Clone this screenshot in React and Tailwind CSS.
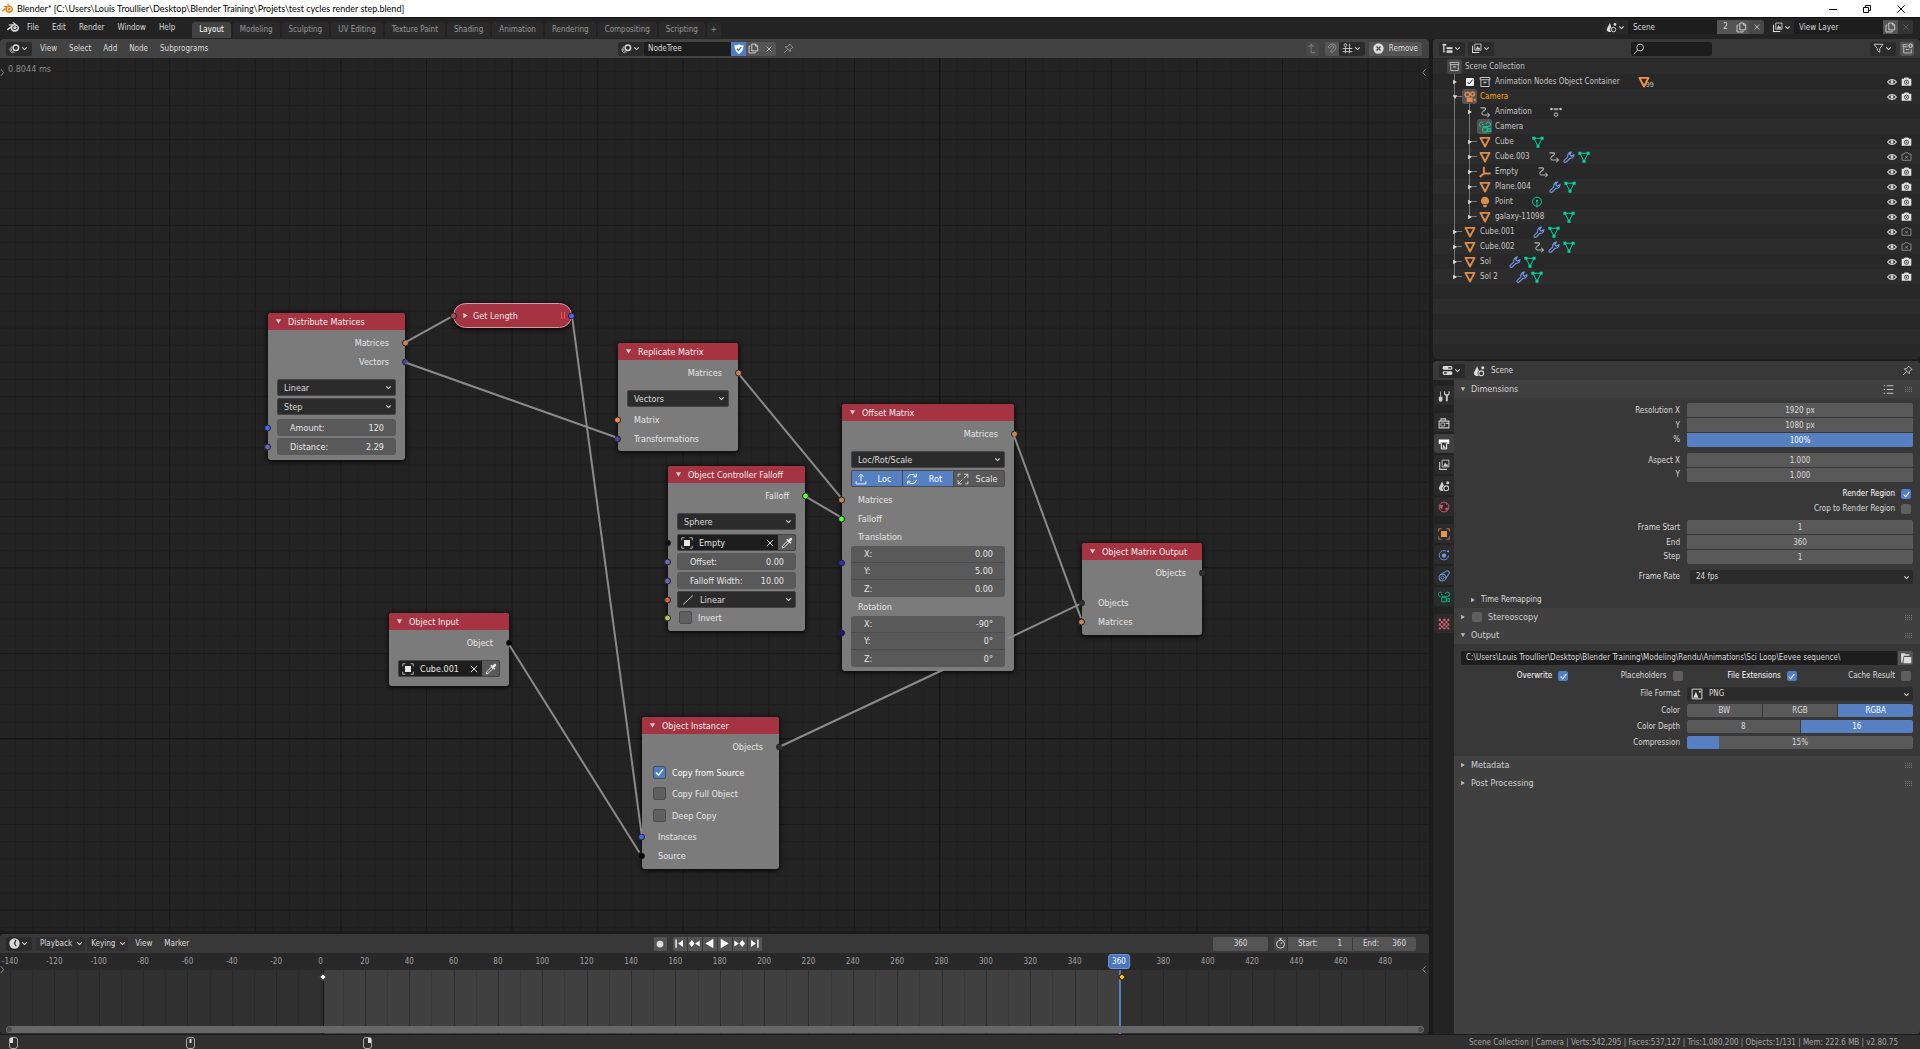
import React, { useState } from 'react'
import clsx from 'clsx'
import { SiBlender } from 'react-icons/si'

/* ---------- icons, all on a 16x16 grid ---------- */

const ICONS = {
  chevron: <path d="M4 6l4 4 4-4" fill="none" stroke="currentColor" strokeWidth="1.8" />,
  left: <path d="M10 2L5 8l5 6" fill="none" stroke="currentColor" strokeWidth="1.6" />,
  right: <path d="M5 2l5 6-5 6" fill="none" stroke="currentColor" strokeWidth="1.6" />,
  nodetree: (
    <>
      <circle cx="10" cy="7" r="4" fill="none" stroke="currentColor" strokeWidth="2.2" />
      <path d="M3.6 5a6 6 0 0 0 4.8 8.6M1.6 8a5 5 0 0 0 4 6.4" fill="none" stroke="currentColor" strokeWidth="1.2" />
    </>
  ),
  shield: (
    <>
      <path d="M8 1.5c2 1.2 3.8 1.6 6 1.6 0 5-1.5 9-6 11.4C3.5 12.1 2 8.1 2 3.1c2.200 0 4-.4 6-1.6z" fill="currentColor" />
      <path d="M5 7.500l2.300 2.500L11 5.500" fill="none" stroke="#4772b3" strokeWidth="1.8" />
    </>
  ),
  copy: (
    <>
      <path d="M5.5 1.5H11l3 3v7H5.500z" fill="none" stroke="currentColor" strokeWidth="1.3" />
      <path d="M11 1.5v3h3M3.5 4.5h-2v10h9V13" fill="none" stroke="currentColor" strokeWidth="1.3" />
    </>
  ),
  close: <path d="M3 3l10 10M13 3L3 13" fill="none" stroke="currentColor" strokeWidth="1.5" />,
  pin: <path d="M9.5 1.5l5 5-1.500.5-2.500 2.500v3L3.500 5.500h3L9 3zM6.500 9.500l-5 5" fill="none" stroke="currentColor" strokeWidth="1.2" />,
  parent: <path d="M6 14V2M2.500 5.500L6 2l3.500 3.500M6 14h6" fill="none" stroke="currentColor" strokeWidth="1.6" />,
  magnet: <path d="M3 5.500L6.500 2.300a5 5 0 0 1 7 7L8.500 14l-2-2.200 4.700-4.500a2.200 2.200 0 0 0-3-3L4.800 7.500z" fill="none" stroke="currentColor" strokeWidth="1.2" />,
  snapgrid: (
    <>
      <path d="M5 6v9M11 1v14M1 8h14M1 12.500h14" fill="none" stroke="currentColor" strokeWidth="1.2" />
      <circle cx="5" cy="3" r="2" fill="none" stroke="currentColor" strokeWidth="1.2" />
    </>
  ),
  remove: (
    <>
      <circle cx="8" cy="8" r="7.500" fill="currentColor" />
      <path d="M5 5l6 6M11 5l-6 6" stroke="#4a4a4a" strokeWidth="1.8" />
    </>
  ),
  scene: (
    <>
      <path d="M5.500 1.500L1 10.500a5 4 0 0 0 6.500 4 5 5 0 0 1 .3-7z" fill="currentColor" />
      <circle cx="11" cy="11" r="3.2" fill="none" stroke="currentColor" strokeWidth="1.4" />
      <circle cx="13" cy="3.5" r="2" fill="currentColor" />
    </>
  ),
  viewlayer: (
    <>
      <path d="M5.500 1.500h9v9h-9z" fill="none" stroke="currentColor" strokeWidth="1.2" />
      <path d="M7 9.500l2.500-5 2 3 .8-1 1.200 3zM3 4v9h9v1.500H1.500V4z" fill="currentColor" />
    </>
  ),
  outliner: <path d="M1 1.500h5v2H1zM2 4h1.300v9.500H2zM3 7.500h3M3 12.500h3M7 6.200h8v2.600H7zM7 11h8v3H7z" fill="currentColor" stroke="currentColor" strokeWidth=".5" />,
  search: (
    <>
      <circle cx="9.5" cy="6" r="4.500" fill="none" stroke="currentColor" strokeWidth="1.3" />
      <path d="M6.300 9.300l-4.800 5.200" stroke="currentColor" strokeWidth="1.3" />
    </>
  ),
  filter: <path d="M1.500 1.800h13L9.800 8v5.500L6.300 11V8z" fill="none" stroke="currentColor" strokeWidth="1.3" />,
  newcol: (
    <>
      <path d="M1.500 2.500H8M1.500 5.500H8M1.500 2.500v3M2.500 6v8.500h11V9M5.500 9.500h5" fill="none" stroke="currentColor" strokeWidth="1.3" />
      <circle cx="12.5" cy="4" r="3.3" fill="currentColor" />
      <path d="M12.500 2v4M10.500 4h4" stroke="#545454" strokeWidth="1" />
    </>
  ),
  collection: (
    <>
      <path d="M1.500 2h13v3h-13zM2.500 5v9h11V5" fill="none" stroke="currentColor" strokeWidth="1.3" />
      <path d="M6 7.500h4v2H6z" fill="currentColor" />
    </>
  ),
  mesh: <path d="M2 2.500h12L8 14z" fill="none" stroke="currentColor" strokeWidth="2.6" strokeLinejoin="round" />,
  meshdata: (
    <>
      <path d="M2.500 3h11L8 13.500z" fill="none" stroke="currentColor" strokeWidth="1.3" />
      <path d="M.5 1h4v4h-4zM11.500 1h4v4h-4zM6 11.500h4v4H6z" fill="currentColor" />
    </>
  ),
  camera: (
    <>
      <circle cx="4.5" cy="4.5" r="3" fill="none" stroke="currentColor" strokeWidth="2" />
      <circle cx="11.5" cy="4" r="2.5" fill="none" stroke="currentColor" strokeWidth="2" />
      <path d="M3.500 8.500h8v6h-8zM12 11.500l3.500-2v5z" fill="currentColor" />
    </>
  ),
  cameradata: (
    <>
      <path d="M3 7.500a3 3 0 1 1 2-5.500M5 7.500h8a3 3 0 1 0-3.500-3.500M5 9v5.500h6V9zM11 11.500l4-2v5l-4-2" fill="none" stroke="currentColor" strokeWidth="1.3" />
      <circle cx="5" cy="4.5" r="1" fill="currentColor" />
    </>
  ),
  anim: <path d="M2 2.500h5.500c1.500 0 1.500 2 .3 2.800L5 7.500C3 9 3.500 12 6 12h8M11 9l3 3-3 3" fill="none" stroke="currentColor" strokeWidth="1.4" />,
  action: (
    <>
      <circle cx="2" cy="4" r="1.8" fill="currentColor" />
      <circle cx="14" cy="4" r="1.8" fill="currentColor" />
      <path d="M5 2.500h6v3H5z" fill="currentColor" opacity=".7" />
      <circle cx="8" cy="11.5" r="2.3" fill="none" stroke="currentColor" strokeWidth="1.3" />
    </>
  ),
  wrench: (
    <path d="M1.500 14.500c-.8-1 0-2 .8-2.700l4-3.600C5.800 5 7.500 1.800 11 1.500L9 4.500 11 7l3.500-2c0 3.500-2.500 5.300-5.300 4.700L5 14c-1 1-2.500 1.500-3.500.5z" fill="none" stroke="currentColor" strokeWidth="1.5" />
  ),
  empty: <path d="M6.500 1v9M6.500 10h9M6.500 10L1 14.500" fill="none" stroke="currentColor" strokeWidth="2.6" />,
  bulb: <path d="M8 1a5.500 5.500 0 0 1 3 10H5a5.500 5.500 0 0 1 3-10zM5.500 12h5v1.500L9.500 15h-3l-1-1.500z" fill="currentColor" />,
  lightdata: (
    <>
      <circle cx="8" cy="7.5" r="6" fill="none" stroke="currentColor" strokeWidth="1.3" />
      <circle cx="8" cy="6.5" r="1.5" fill="currentColor" />
      <path d="M8 8v7.500" stroke="currentColor" strokeWidth="1.2" />
    </>
  ),
  eye: (
    <>
      <path d="M1 8c3-5 11-5 14 0-3 5-11 5-14 0z" fill="none" stroke="currentColor" strokeWidth="1.8" />
      <circle cx="8" cy="8" r="2.3" fill="currentColor" />
    </>
  ),
  photo: (
    <>
      <path d="M1 4h3l1.500-2h5L12 4h3v10H1z" fill="currentColor" />
      <circle cx="8" cy="9" r="3" fill="none" stroke="#2b2b2b" strokeWidth="1.2" />
      <path d="M8 8v2M7 9h2" stroke="#2b2b2b" />
    </>
  ),
  photooff: <path d="M1.500 4.500h3L6 2.500h4l1.500 2h3v9h-13zM6 7l4 4M10 7l-4 4" fill="none" stroke="currentColor" strokeWidth="1.2" />,
  properties: (
    <>
      <rect x="1" y="1.5" width="14" height="5.5" rx="2" fill="currentColor" />
      <rect x="1" y="9" width="14" height="5.5" rx="2" fill="currentColor" />
      <path d="M9 4.200h4.500M3 11.700h4" stroke="#2b2b2b" strokeWidth="2" />
    </>
  ),
  list: <path d="M1 2.500h2M1 8h2M1 13.500h2M5.500 2.500H15M5.500 8H15M5.500 13.500H15" stroke="currentColor" strokeWidth="1.3" />,
  tool: <path d="M3 2h1v7h2v4a2 2 0 0 1-5 0V9h2zM8 1.500v4l2.500 2.500v7H13V8l2.500-2.500v-4H14v3l-1 1h-2.500l-1-1v-3z" fill="currentColor" />,
  render: (
    <>
      <path d="M1.500 5.500h13v9h-13zM4 5V2.500h6V5M10.500 8.500h4" fill="none" stroke="currentColor" strokeWidth="1.5" />
      <path d="M4 8h5v4H4z" fill="none" stroke="currentColor" strokeWidth="1.2" />
    </>
  ),
  output: (
    <>
      <path d="M1 2h14v6h-2.500V6h-9v2H1z" fill="currentColor" />
      <path d="M4.500 7v7.500h7V7" fill="none" stroke="currentColor" strokeWidth="1.3" />
      <path d="M6 13l1.500-4L10 13z" fill="currentColor" />
    </>
  ),
  world: (
    <>
      <circle cx="8" cy="8" r="6.5" fill="none" stroke="currentColor" strokeWidth="1.3" />
      <path d="M2.500 5.500L6 5l1 1.500-1.500 2 .5 2-1 .5-2.500-3zM9.500 10l2.500-1.500 1.500 1-2 3.500-1.500-1zM10.500 2.500l2 1.500-1.500 1.500z" fill="currentColor" />
    </>
  ),
  object: (
    <>
      <path d="M1 4.500V1h3.500M11.500 1H15v3.500M15 11.500V15h-3.500M4.500 15H1v-3.500" fill="none" stroke="currentColor" strokeWidth="1.2" opacity=".8" />
      <path d="M4 4h8v8H4z" fill="currentColor" />
    </>
  ),
  physics: (
    <>
      <path d="M11 3A6.200 6.200 0 1 0 14 8.500" fill="none" stroke="currentColor" strokeWidth="1.2" />
      <circle cx="8" cy="8.5" r="3" fill="currentColor" />
      <circle cx="13.5" cy="3" r="1.5" fill="currentColor" />
    </>
  ),
  constraint: (
    <>
      <circle cx="6" cy="10" r="4.5" fill="none" stroke="currentColor" strokeWidth="1.4" />
      <circle cx="6" cy="10" r="2" fill="none" stroke="currentColor" strokeWidth="1.2" />
      <path d="M3 6.500l8-5a2.500 2.500 0 0 1 3.500 3.500L10 12" fill="none" stroke="currentColor" strokeWidth="1.4" />
    </>
  ),
  texture: (
    <path d="M1 1h3v3H1zM7 1h3v3H7zM12.500 1H15v3h-2.500zM4 4h3v3H4zM10 4h2.500v3H10zM1 7h3v3H1zM7 7h3v3H7zM12.500 7H15v3h-2.500zM4 10h3v2.500H4zM10 10h2.500v2.500H10zM1 12.500h3V15H1zM7 12.500h3V15H7zM12.500 12.500H15V15h-2.500z" fill="currentColor" />
  ),
  folder: <path d="M1.500 1.500h5l1 1.500h5v2H5l-1.500 7v2h-2zM5.500 6.500H15V15H4.500z" fill="currentColor" />,
  image: (
    <>
      <path d="M1.500 1.500h13v13h-13z" fill="none" stroke="currentColor" strokeWidth="1.3" />
      <path d="M3 13l3.500-8 3.500 8zM10.500 3.500h2.500V6h-2.500z" fill="currentColor" />
    </>
  ),
  dropper: (
    <>
      <path d="M1.500 14.500l.8-2.800L8.500 5.500l2 2-6.200 6.200z" fill="none" stroke="currentColor" strokeWidth="1.3" />
      <path d="M7 3.500l1.200-1.200 1.600 1.500L12 1.500c1.500-1.500 4 1 2.500 2.500l-2.300 2.200 1.500 1.600-1.200 1.200z" fill="currentColor" />
    </>
  ),
  linear: <path d="M1.500 14l13-12" stroke="currentColor" strokeWidth="1.2" />,
  loc: <path d="M8 11V1.500M4.500 5L8 1.500 11.500 5M1.500 11v3.500h13V11" fill="none" stroke="currentColor" strokeWidth="1.2" />,
  rot: <path d="M2 7a6 6 0 0 1 11-2.500M13.800 1v4H10M14 9a6 6 0 0 1-11 2.500M2.200 15v-4H6" fill="none" stroke="currentColor" strokeWidth="1.3" />,
  scale: <path d="M9.500 1.500h5v5M14.500 1.500L9 7M6.500 14.500h-5v-5M1.500 14.500L7 9M1.500 5V1.500H5M14.500 11v3.500H11" fill="none" stroke="currentColor" strokeWidth="1.1" />,
  clock: (
    <>
      <circle cx="8" cy="8" r="7.5" fill="currentColor" />
      <path d="M10 2.500L8 8l2.500 4" fill="none" stroke="#2b2b2b" strokeWidth="1.8" />
    </>
  ),
  stopwatch: (
    <>
      <circle cx="8" cy="9" r="5.8" fill="none" stroke="currentColor" strokeWidth="1.3" />
      <path d="M6 1.200h4M8 1v2M13 2.500L14.500 4M8 9l2.500-3" fill="none" stroke="currentColor" strokeWidth="1.3" />
    </>
  ),
  record: <circle cx="8" cy="8" r="4.500" fill="currentColor" />,
  first: <path d="M2 2h2v12H2zM13 3v10L6 8z" fill="currentColor" />,
  prevkey: <path d="M0 8l4-5 4 5-4 5zM15.500 3.500v9L9 8z" fill="currentColor" />,
  playrev: <path d="M13.500 1v14L2 8z" fill="currentColor" />,
  play: <path d="M2.500 1v14L14 8z" fill="currentColor" />,
  nextkey: <path d="M8 8l4-5 4 5-4 5zM.5 3.500v9L7 8z" fill="currentColor" />,
  last: <path d="M12 2h2v12h-2zM3 3v10l7-5z" fill="currentColor" />,
  tridown: <path d="M2 3h12L8 13z" fill="currentColor" />,
  triright: <path d="M3 2v12l10-6z" fill="currentColor" />,
  check: <path d="M3 8l3.500 4L13 3.500" fill="none" stroke="currentColor" strokeWidth="2" />,
}

function Icon({ name, size = 12, className }) {
  return (
    <svg viewBox="0 0 16 16" width={size} height={size} className={clsx('shrink-0', className)} aria-hidden="true">
      {ICONS[name]}
    </svg>
  )
}

/* ---------- shared controls ---------- */

function Check({ label, checked, size = 'sm', before }) {
  const [on, setOn] = useState(!!checked)
  const box = (
    <span className={clsx('relative shrink-0', size === 'lg' ? 'size-[13px]' : 'size-[10px]')}>
      <input
        type="checkbox"
        checked={on}
        onChange={() => setOn(!on)}
        className={clsx(
          'block size-full appearance-none rounded-[2px]',
          size === 'lg' && 'border border-[#4d4d4d]',
          on ? 'bg-[#4f7dc8]' : 'bg-[#5f5f5f]'
        )}
      />
      {on && <Icon name="check" size={size === 'lg' ? 11 : 9} className="pointer-events-none absolute inset-0 m-auto text-white" />}
    </span>
  )
  return (
    <label className="flex items-center gap-[6px]">
      {!before && box}
      <span className={clsx(on && 'text-white')}>{label}</span>
      {before && box}
    </label>
  )
}

function Dropdown({ value, label, icon, className }) {
  return (
    <div className={clsx('relative flex items-center rounded-[2px] bg-[#2b2b2b] text-[#dcdcdc]', className)}>
      {icon && <Icon name={icon} size={12} className="ml-1" />}
      <select aria-label={label} className="h-full min-w-0 flex-1 appearance-none bg-transparent px-[6px] outline-none">
        <option>{value}</option>
      </select>
      <Icon name="chevron" size={9} className="pointer-events-none absolute right-[2px]" />
    </div>
  )
}

// editor type selector and similar icon + arrow buttons
function IconMenu({ icon, label }) {
  return (
    <button aria-label={label} className="flex h-[14px] items-center rounded-[2px] bg-[#2b2b2b] px-[3px] text-[#d9d9d9]">
      <Icon name={icon} size={11} />
      <Icon name="chevron" size={9} />
    </button>
  )
}

/* ---------- top bar ---------- */

const WORKSPACES = ['Layout', 'Modeling', 'Sculpting', 'UV Editing', 'Texture Paint', 'Shading', 'Animation', 'Rendering', 'Compositing', 'Scripting', '+']

function TitleBar() {
  return (
    <div className="flex h-[17px] items-center bg-white font-['Lato','Open_Sans',sans-serif] text-[9px] text-black">
      <SiBlender size={11} className="mr-1 ml-[2px] text-[#e87d0d]" />
      <span>Blender* [C:\Users\Louis Troullier\Desktop\Blender Training\Projets\test cycles render step.blend]</span>
      <div className="mr-[15px] ml-auto flex items-center gap-[26px]">
        <button aria-label="Minimize"><svg width="8" height="8" viewBox="0 0 8 8"><path d="M0 4.500h8" stroke="#000" /></svg></button>
        <button aria-label="Restore">
          <svg width="8" height="8" viewBox="0 0 8 8"><path d="M.5 2.500h5v5h-5zM2.500 2V.5h5v5H6" fill="none" stroke="#000" /></svg>
        </button>
        <button aria-label="Close"><svg width="8" height="8" viewBox="0 0 8 8"><path d="M.5.5l7 7M7.500.5l-7 7" stroke="#000" /></svg></button>
      </div>
    </div>
  )
}

function DataBlock({ icon, value, users, dim, label }) {
  return (
    <div className="flex h-[14px] items-center overflow-hidden rounded-[2px] bg-[#1d1d1d]">
      <button aria-label={label} className="flex h-full items-center bg-[#282828] px-[2px]">
        <Icon name={icon} size={11} />
        <Icon name="chevron" size={9} />
      </button>
      <input aria-label={label + ' name'} defaultValue={value} className="h-full w-[89px] bg-transparent px-[5px] outline-none" />
      {users && <button className="h-full w-[17px] bg-[#545454]">{users}</button>}
      <button aria-label={'New ' + label} className="flex h-full w-[15px] items-center justify-center bg-[#545454]"><Icon name="copy" size={11} /></button>
      <button aria-label={'Unlink ' + label} className={clsx('flex h-full w-[15px] items-center justify-center', dim ? 'bg-[#333] text-[#666]' : 'bg-[#484848]')}>
        <Icon name="close" size={8} />
      </button>
    </div>
  )
}

function TopBar() {
  return (
    <header className="flex h-[22px] items-start border-t border-[#111] bg-[#232323] text-[8px] text-[#d9d9d9]">
      <SiBlender size={12} className="mt-[3px] ml-[7px]" />
      <nav className="mt-[4px] ml-[8px] flex gap-[13px] leading-[11px]">
        {['File', 'Edit', 'Render', 'Window', 'Help'].map(m => <button key={m}>{m}</button>)}
      </nav>
      <div className="mt-[4px] ml-[17px] flex gap-[2px]">
        {WORKSPACES.map((w, i) => (
          <button key={w} className={clsx('h-[16px] rounded-t-[3px]', w === '+' ? 'px-[4px]' : 'px-[7px]', i === 0 ? 'bg-[#424242] text-white' : 'bg-[#2a2a2a] text-[#989898]')}>{w}</button>
        ))}
      </div>
      <div className="mt-[2px] mr-[7px] ml-auto flex gap-[6px]">
        <DataBlock icon="scene" value="Scene" users="2" label="Scene" />
        <DataBlock icon="viewlayer" value="View Layer" dim label="View layer" />
      </div>
    </header>
  )
}

/* ---------- node editor ---------- */

function Socket({ color, side = 'left', className = 'top-1/2' }) {
  return (
    <span
      className={clsx('absolute size-[7px] -translate-y-1/2 rounded-full border border-[#222]', className, side === 'left' ? '-left-[4px]' : '-right-[4px]')}
      style={{ backgroundColor: color }}
    />
  )
}

// node coordinates are window coordinates, the canvas begins below the bars
const CANVAS_TOP = 58

function Node({ title, x, y, w, children }) {
  return (
    <section className="absolute rounded-[3px] bg-[#7b7b7b] shadow-[0_1px_4px_1px_rgba(0,0,0,0.7)]" style={{ left: x, top: y - CANVAS_TOP, width: w }}>
      <h2 className="flex h-[17px] items-center gap-[6px] rounded-t-[3px] bg-[#a53341] pl-[7px] text-[#eee]">
        <Icon name="tridown" size={7} className="text-[#ccc]" />
        {title}
      </h2>
      <div className="pt-[3px]">{children}</div>
    </section>
  )
}

function Out({ name, color }) {
  return (
    <div className="relative flex h-[19px] items-center justify-end pr-[16px]">
      {name}
      <Socket color={color} side="right" />
    </div>
  )
}

function In({ name, color, children, className }) {
  return (
    <div className={clsx('relative flex items-center', children ? 'h-[17px] px-[9px]' : 'h-[19px] pl-[16px]', className)}>
      {color && <Socket color={color} />}
      {children || name}
    </div>
  )
}

function Num({ label, value, className }) {
  return (
    <label className={clsx('flex h-[17px] w-full items-center bg-[#595959] pr-[12px] pl-[13px]', className || 'rounded-[3px]')}>
      {label}
      <input defaultValue={value} className="w-0 min-w-0 flex-1 bg-transparent text-right outline-none" />
    </label>
  )
}

const NODE_SELECT = 'h-[17px] flex-1 border border-[#444]'

function ObjectPicker({ value }) {
  return (
    <div className="flex h-[17px] flex-1 items-center overflow-hidden rounded-[2px] border border-[#444] bg-[#1d1d1d]">
      <Icon name="object" size={12} className="ml-[3px]" />
      <input aria-label="Object" defaultValue={value} className="w-0 min-w-0 flex-1 bg-transparent pl-[6px] outline-none" />
      <button aria-label="Clear object" className="px-[3px]"><Icon name="close" size={10} /></button>
      <button aria-label="Pick object" className="flex h-full w-[17px] items-center justify-center bg-[#595959]"><Icon name="dropper" size={12} /></button>
    </div>
  )
}

function Vec({ values, color, label }) {
  return (
    <div className="relative px-[9px]">
      <Socket color={color} className="top-1/3" />
      <div className="divide-y divide-[#4d4d4d] overflow-hidden rounded-[3px]" role="group" aria-label={label}>
        {['X:', 'Y:', 'Z:'].map((axis, i) => <Num key={axis} label={axis} value={values[i]} className="rounded-none" />)}
      </div>
    </div>
  )
}

const WIRES = [
  [404, 343, 453, 316],
  [404, 362, 618, 438],
  [572, 316, 642, 837],
  [738, 373, 842, 499],
  [805, 496, 842, 518],
  [1013, 433, 1082, 621],
  [508, 643, 641, 855],
  // passes below the fields of the offset node
  [779, 747, 947, 668],
  [1005, 640, 1082, 603],
]

function NodeCanvas() {
  const orange = '#c9835a'
  return (
    <main className="relative min-h-0 flex-1 overflow-hidden bg-[#232323] text-[9px] text-[#e6e6e6]">
      <svg className="absolute inset-0 size-full" aria-hidden="true">
        <defs>
          <pattern id="minor" x="939.600" y="680.500" width="17.120" height="17.120" patternUnits="userSpaceOnUse">
            <path d="M.5 0v17.120M0 .5h17.120" stroke="#1e1e1e" />
          </pattern>
          <pattern id="major" x="939.600" y="680.500" width="85.600" height="85.600" patternUnits="userSpaceOnUse">
            <path d="M.5 0v85.600M0 .5h85.600" stroke="#1a1a1a" />
          </pattern>
        </defs>
        <rect width="100%" height="100%" fill="url(#minor)" />
        <rect width="100%" height="100%" fill="url(#major)" />
        <path d="M939.500 0v2000M0 680.500h4000" stroke="#151515" />
      </svg>
      <span className="absolute top-[5px] left-[8px] text-[#8c8c8c]">0.8044 ms</span>
      <Icon name="right" size={9} className="absolute top-[10px] -left-[2px] text-[#999]" />
      <Icon name="left" size={9} className="absolute top-[10px] right-0 text-[#999]" />

      <Node title="Distribute Matrices" x={268} y={313} w={137}>
        <Out name="Matrices" color={orange} />
        <Out name="Vectors" color="#4a459c" />
        <In className="mt-[8px]"><Dropdown label="Mode" value="Linear" className={NODE_SELECT} /></In>
        <In className="mt-[2px]"><Dropdown label="Distance mode" value="Step" className={NODE_SELECT} /></In>
        <In className="mt-[4px]" color="#4a63f5"><Num label="Amount:" value="120" /></In>
        <In className="mt-[2px] mb-[4px]" color="#6565bb"><Num label="Distance:" value="2.29" /></In>
        <div className="h-px" />
      </Node>

      <section className="absolute top-[245px] left-[453px] flex h-[25px] w-[119px] items-center rounded-full border border-[#d79aa2] bg-[#a53341] pl-[8px] shadow-[0_1px_4px_1px_rgba(0,0,0,0.7)]">
        <Icon name="triright" size={7} className="mr-[4px] text-[#ccc]" />
        <h2>Get Length</h2>
        <span className="mr-[6px] ml-auto h-[7px] w-[4px] border-x border-[#f0505f]" />
        <Socket color="#a85055" />
        <Socket color="#4a63f5" side="right" />
      </section>

      <Node title="Replicate Matrix" x={618} y={343} w={120}>
        <Out name="Matrices" color={orange} />
        <In className="mt-[8px]"><Dropdown label="Transformation type" value="Vectors" className={NODE_SELECT} /></In>
        <In className="mt-[3px]" name="Matrix" color="#f08a4b" />
        <In className="mb-[3px]" name="Transformations" color="#4a459c" />
      </Node>

      <Node title="Object Controller Falloff" x={668} y={466} w={137}>
        <Out name="Falloff" color="#52ff3a" />
        <In className="mt-[8px]"><Dropdown label="Falloff type" value="Sphere" className={NODE_SELECT} /></In>
        <In className="mt-[4px]" color="#111"><ObjectPicker value="Empty" /></In>
        <In className="mt-[2px]" color="#6565bb"><Num label="Offset:" value="0.00" /></In>
        <In className="mt-[2px]" color="#6565bb"><Num label="Falloff Width:" value="10.00" /></In>
        <In className="mt-[2px]" color="#c4674b"><Dropdown label="Interpolation" icon="linear" value="Linear" className={NODE_SELECT} /></In>
        <In className="mt-[1px] mb-[5px] pl-[11px]" color="#b9b95e"><Check size="lg" label="Invert" /></In>
      </Node>

      <Node title="Offset Matrix" x={842} y={404} w={172}>
        <Out name="Matrices" color={orange} />
        <In className="mt-[8px]"><Dropdown label="Transform type" value="Loc/Rot/Scale" className={NODE_SELECT} /></In>
        <div className="mx-[9px] mt-[2px] grid h-[17px] grid-cols-3 gap-px overflow-hidden rounded-[2px] border border-[#4a4a4a] bg-[#4a4a4a]">
          {[['loc', 'Loc'], ['rot', 'Rot'], ['scale', 'Scale']].map(([icon, name], i) => (
            <button key={name} className={clsx('flex items-center', i < 2 ? 'bg-[#5580c4] text-white' : 'bg-[#595959]')}>
              <Icon name={icon} size={12} className="ml-[3px]" />
              <span className="flex-1">{name}</span>
            </button>
          ))}
        </div>
        <In className="mt-[3px]" name="Matrices" color={orange} />
        <In name="Falloff" color="#52ff3a" />
        <div className="flex h-[18px] items-center pl-[16px]">Translation</div>
        <Vec label="Translation" color="#2f30b0" values={['0.00', '5.00', '0.00']} />
        <div className="flex h-[19px] items-center pl-[16px]">Rotation</div>
        <Vec label="Rotation" color="#26107a" values={['-90°', '0°', '0°']} />
        <div className="h-[4px]" />
      </Node>

      <Node title="Object Input" x={389} y={613} w={120}>
        <Out name="Object" color="#000" />
        <In className="mt-[8px] mb-[9px]"><ObjectPicker value="Cube.001" /></In>
      </Node>

      <Node title="Object Instancer" x={642} y={717} w={137}>
        <Out name="Objects" color="#303030" />
        <In className="mt-[8px] pl-[11px]"><Check size="lg" checked label="Copy from Source" /></In>
        <In className="mt-[4px] pl-[11px]"><Check size="lg" label="Copy Full Object" /></In>
        <In className="mt-[5px] pl-[11px]"><Check size="lg" label="Deep Copy" /></In>
        <In className="mt-[3px]" name="Instances" color="#4a63f5" />
        <In className="mb-[4px]" name="Source" color="#000" />
      </Node>

      <Node title="Object Matrix Output" x={1082} y={543} w={120}>
        <Out name="Objects" color="#303030" />
        <In className="mt-[11px]" name="Objects" color="#303030" />
        <In className="mb-[4px]" name="Matrices" color={orange} />
      </Node>

      <svg className="pointer-events-none absolute inset-0 size-full" aria-hidden="true">
        {WIRES.map(([x1, y1, x2, y2]) => {
          const len = Math.hypot(x2 - x1, y2 - y1)
          const dx = ((x2 - x1) / len) * 3
          const dy = ((y2 - y1) / len) * 3
          return <line key={x1 + '-' + y1} x1={x1 + dx} y1={y1 - CANVAS_TOP + dy} x2={x2 - dx} y2={y2 - CANVAS_TOP - dy} stroke="#8a8a8a" strokeWidth="2" />
        })}
      </svg>
    </main>
  )
}

function NodeEditor() {
  return (
    <div className="flex min-h-0 flex-1 flex-col overflow-hidden rounded-[4px]">
      <div className="flex h-[19px] shrink-0 items-center bg-[#424242] pr-[7px] pl-[6px] text-[8px] text-[#dcdcdc]">
        <div className="flex flex-1 items-center">
          <IconMenu icon="nodetree" label="Editor type" />
          <div className="ml-[8px] flex gap-[12px]">
            {['View', 'Select', 'Add', 'Node', 'Subprograms'].map(m => <button key={m}>{m}</button>)}
          </div>
        </div>
        <div className="mr-4 flex items-center">
          <div className="flex h-[14px] items-center overflow-hidden rounded-[2px]">
            <IconMenu icon="nodetree" label="Browse node tree" />
            <input aria-label="Node tree name" defaultValue="NodeTree" className="h-full w-[87px] bg-[#1d1d1d] px-[4px] outline-none" />
            <button aria-label="Fake user" className="flex h-full w-[15px] items-center justify-center bg-[#4f7dc8] text-white"><Icon name="shield" size={12} /></button>
            <button aria-label="New node tree" className="flex h-full w-[15px] items-center justify-center bg-[#545454]"><Icon name="copy" size={11} /></button>
            <button aria-label="Unlink node tree" className="flex h-full w-[15px] items-center justify-center bg-[#545454]"><Icon name="close" size={8} /></button>
          </div>
          <button aria-label="Pin" className="ml-[7px] text-[#aaa]"><Icon name="pin" size={11} /></button>
        </div>
        <div className="flex flex-1 items-center justify-end">
          <button aria-label="Parent node tree" className="flex h-[14px] w-[13px] items-center justify-center rounded-[2px] bg-[#4a4a4a] text-[#777]"><Icon name="parent" size={11} /></button>
          <div className="ml-[6px] flex overflow-hidden rounded-[2px]">
            <button aria-label="Snap" className="flex h-[14px] w-[14px] items-center justify-center bg-[#545454] text-[#999]"><Icon name="magnet" size={11} /></button>
            <IconMenu icon="snapgrid" label="Snap element" />
          </div>
          <button className="ml-[4px] flex h-[14px] items-center gap-[5px] rounded-[2px] bg-[#545454] px-[4px]">
            <Icon name="remove" size={11} />
            Remove
          </button>
        </div>
      </div>
      <NodeCanvas />
    </div>
  )
}

/* ---------- timeline ---------- */

const LABELS = Array.from({ length: 32 }, (_, i) => -140 + i * 20)
const pos = frame => ((320.5 + frame * 2.218) / 1429) * 100 + '%'

function Timeline() {
  return (
    <div className="relative mt-[3px] flex shrink-0 flex-col overflow-hidden rounded-[4px] bg-[#303030] text-[8px] text-[#dcdcdc]">
      <div className="flex h-[19px] items-center bg-[#383838] pr-[13px] pl-[6px]">
        <div className="flex flex-1 items-center">
          <IconMenu icon="clock" label="Editor type" />
          <div className="ml-[4px] flex h-[14px] gap-[2px]">
            {['Playback', 'Keying'].map(m => (
              <button key={m} className="flex items-center gap-[3px] rounded-[2px] bg-[#303030] pr-px pl-[4px]">{m}<Icon name="chevron" size={9} /></button>
            ))}
            <button className="ml-[5px]">View</button>
            <button className="ml-[10px]">Marker</button>
          </div>
        </div>
        <div className="mr-[7px] flex">
          <button aria-label="Auto keying" className="flex h-[14px] w-[13px] items-center justify-center rounded-[2px] bg-[#545454]"><Icon name="record" size={12} /></button>
          <div className="ml-[6px] flex gap-px overflow-hidden rounded-[2px]">
            {['first', 'prevkey', 'playrev', 'play', 'nextkey', 'last'].map(n => (
              <button key={n} aria-label={n} className="flex h-[14px] w-[14px] items-center justify-center bg-[#545454] text-white"><Icon name={n} size={11} /></button>
            ))}
          </div>
        </div>
        <div className="flex flex-1 justify-end">
          <input aria-label="Current frame" defaultValue="360" className="h-[14px] w-[55px] rounded-[2px] bg-[#545454] text-center outline-none" />
          <div className="ml-[6px] flex h-[14px] gap-px overflow-hidden rounded-[2px]">
            <button aria-label="Use preview range" className="flex w-[13px] items-center justify-center bg-[#484848]"><Icon name="stopwatch" size={11} /></button>
            <label className="flex w-[64px] items-center bg-[#545454] px-[10px]">Start:<input defaultValue="1" className="w-0 flex-1 text-right outline-none" /></label>
            <label className="flex w-[63px] items-center bg-[#545454] px-[10px]">End:<input defaultValue="360" className="w-0 flex-1 text-right outline-none" /></label>
          </div>
        </div>
      </div>

      <div className="relative h-[17px] bg-[#282828] text-[#a0a0a0]">
        {LABELS.map(f => (
          <span key={f} className="absolute top-[3px] -translate-x-1/2" style={{ left: pos(f) }}>{f}</span>
        ))}
        <span className="absolute top-px z-10 flex h-[15px] -translate-x-1/2 items-center rounded-[3px] border border-[#6f97da] bg-[#4a76be] px-[3px] text-white" style={{ left: pos(360) }}>360</span>
      </div>

      <div className="relative h-[64px]">
        <div className="absolute inset-y-0 bg-[#404040]" style={{ left: pos(1), right: 'calc(100% - ' + pos(360) + ')' }} />
        {LABELS.map(f => (
          <React.Fragment key={f}>
            <i className={clsx('absolute inset-y-0 w-px', f > 0 && f < 360 ? 'bg-[#2e2e2e]' : 'bg-[#282828]')} style={{ left: pos(f) }} />
            <i className="absolute inset-y-0 w-px bg-black/10" style={{ left: pos(f + 10) }} />
          </React.Fragment>
        ))}
        <i className="absolute inset-y-0 w-px bg-[#111]" style={{ left: pos(1) }} />
        <i className="absolute inset-y-0 w-[2px] bg-[#5680c2]" style={{ left: pos(360) }} />
        <i className="absolute top-[4px] size-[6px] -translate-x-1/2 rotate-45 border border-black bg-white" style={{ left: pos(1) }} />
        <i className="absolute top-[4px] size-[6px] -translate-x-1/2 rotate-45 border border-black bg-[#ffbf29]" style={{ left: pos(361.5) }} />
        <div className="absolute right-[5px] bottom-px left-[6px] flex h-[7px] items-center justify-between rounded-full bg-[#676767] px-px">
          <i className="size-[5px] rounded-full bg-[#4a4a4a]" />
          <i className="size-[5px] rounded-full bg-[#4a4a4a]" />
        </div>
      </div>
      <Icon name="right" size={9} className="absolute top-[31px] -left-[2px] text-[#999]" />
      <Icon name="left" size={9} className="absolute top-[31px] right-0 text-[#999]" />
    </div>
  )
}

/* ---------- outliner ---------- */

const ORANGE = 'text-[#dd8b4d]'
const GREEN = 'text-[#00d69e]'
const MESH = ['mesh', ORANGE]
const DATA = ['meshdata', GREEN]
const MOD = ['wrench', 'text-[#7199e8]']
const ANIM = ['anim', 'text-[#b4b4b4]']

const TREE = [
  { name: 'Animation Nodes Object Container', depth: 0, icon: ['collection'], check: true, noline: true, extra: [['mesh', 'text-[#f59342]']], count: '99', cam: 1 },
  { name: 'Camera', depth: 0, icon: ['camera', ORANGE], open: true, active: true, cam: 1 },
  { name: 'Animation', depth: 1, icon: ANIM, noline: true, extra: [['action']] },
  { name: 'Camera', depth: 1, icon: ['cameradata', GREEN], leaf: true, boxed: true },
  { name: 'Cube', depth: 1, icon: MESH, extra: [DATA], cam: 1 },
  { name: 'Cube.003', depth: 1, icon: MESH, extra: [ANIM, MOD, DATA], cam: 2 },
  { name: 'Empty', depth: 1, icon: ['empty', ORANGE], extra: [ANIM], cam: 1 },
  { name: 'Plane.004', depth: 1, icon: MESH, extra: [MOD, DATA], cam: 1 },
  { name: 'Point', depth: 1, icon: ['bulb', ORANGE], extra: [['lightdata', GREEN]], cam: 1 },
  { name: 'galaxy-11098', depth: 1, icon: MESH, extra: [DATA], cam: 1, end: true },
  { name: 'Cube.001', depth: 0, icon: MESH, extra: [MOD, DATA], cam: 2 },
  { name: 'Cube.002', depth: 0, icon: MESH, extra: [ANIM, MOD, DATA], cam: 2 },
  { name: 'Sol', depth: 0, icon: MESH, extra: [MOD, DATA], cam: 1 },
  { name: 'Sol 2', depth: 0, icon: MESH, extra: [MOD, DATA], cam: 1, end: true },
]

function Cell({ children, className }) {
  return <span className={clsx('relative flex h-[15px] w-[15px] shrink-0 items-center justify-center', className)}>{children}</span>
}

function TreeRow({ item }) {
  const vline = 'absolute left-[7px] w-px bg-[#777]'
  return (
    <li className="flex h-[15px] items-center pl-[14px] odd:bg-[#282828] even:bg-[#2c2c2c]">
      {item.depth > 0 && <Cell><i className={clsx(vline, 'inset-y-0')} /></Cell>}
      <Cell>
        <i className={clsx(vline, 'top-0', item.end ? 'h-[8px]' : 'bottom-0')} />
        {!item.leaf && !item.noline && <i className="absolute top-[7px] right-0 left-[7px] h-px bg-[#777]" />}
        {!item.leaf && <Icon name={item.open ? 'tridown' : 'triright'} size={6} className="relative text-[#ddd]" />}
      </Cell>
      {item.check && (
        <Cell>
          <input type="checkbox" aria-label="Show in view layer" defaultChecked className="size-[8px] appearance-none rounded-[1px] bg-[#eee]" />
          <Icon name="check" size={8} className="pointer-events-none absolute text-[#222]" />
        </Cell>
      )}
      <Cell className={clsx('rounded-[3px]', (item.active || item.boxed) && 'bg-[#545454]')}>
        <Icon name={item.icon[0]} size={12} className={item.icon[1]} />
      </Cell>
      <span className={clsx('ml-[3px]', item.active && 'text-[#ffa51f]')}>{item.name}</span>
      <span className="ml-[17px] flex">
        {item.extra?.map(([n, c]) => <Cell key={n}><Icon name={n} size={12} className={c} /></Cell>)}
        {item.count && <span className="-ml-[6px] self-end text-[7px] leading-[8px]">{item.count}</span>}
      </span>
      {item.cam && (
        <span className="mr-[8px] ml-auto flex gap-[4px] text-[#e0e0e0]">
          <button aria-label={'Hide ' + item.name}><Icon name="eye" size={10} /></button>
          <button aria-label={'Disable ' + item.name + ' in renders'}>
            <Icon name={item.cam === 1 ? 'photo' : 'photooff'} size={11} className={item.cam === 2 && 'text-[#999]'} />
          </button>
        </span>
      )}
    </li>
  )
}

function Outliner() {
  return (
    <section className="flex h-[320px] shrink-0 flex-col overflow-hidden rounded-[4px] bg-[#282828] text-[8px] text-[#c6c6c6]">
      <div className="flex h-[19px] shrink-0 items-center bg-[#383838] px-[6px]">
        <IconMenu icon="outliner" label="Editor type" />
        <div className="ml-[3px]"><IconMenu icon="viewlayer" label="Display mode" /></div>
        <label className="mr-auto ml-[137px] flex h-[14px] w-[81px] items-center rounded-[2px] bg-[#1d1d1d] pl-[2px]">
          <Icon name="search" size={12} />
          <input aria-label="Search" className="w-0 flex-1 px-1 outline-none" />
        </label>
        <IconMenu icon="filter" label="Filter" />
        <button aria-label="New collection" className="ml-[4px] flex size-[14px] items-center justify-center rounded-[2px] bg-[#545454]"><Icon name="newcol" size={11} /></button>
      </div>
      <div className="mt-px flex h-[15px] shrink-0 items-center bg-[#2c2c2c] pl-[14px]">
        <Cell className="rounded-[3px] bg-[#454545]"><Icon name="collection" size={11} /></Cell>
        <span className="ml-[3px]">Scene Collection</span>
      </div>
      <ul>{TREE.map((item, i) => <TreeRow key={i} item={item} />)}</ul>
      {[0, 1, 2, 3, 4].map(i => <div key={i} className="h-[15px] shrink-0 odd:bg-[#2c2c2c]" />)}
    </section>
  )
}

/* ---------- properties ---------- */

const TABS = [
  ['tool', 'text-[#ccc]', 'Tool', true],
  ['render', 'text-[#ccc]', 'Render'],
  ['output', 'text-white', 'Output'],
  ['viewlayer', 'text-[#ccc]', 'View Layer'],
  ['scene', 'text-[#ccc]', 'Scene'],
  ['world', 'text-[#d1596a]', 'World', true],
  ['object', 'text-[#e8964f]', 'Object'],
  ['physics', 'text-[#6d96e0]', 'Physics'],
  ['constraint', 'text-[#6d96e0]', 'Constraints'],
  ['cameradata', 'text-[#00b882]', 'Data', true],
  ['texture', 'text-[#e0626f]', 'Texture'],
]

function Row({ label, children }) {
  return (
    <div className="grid grid-cols-2 items-center">
      <span className="pr-[7px] text-right">{label}</span>
      {children}
    </div>
  )
}

function Fields({ rows }) {
  return (
    <div className="mb-[6px]">
      {rows.map(([label, value], i) => (
        <label key={label} className="grid grid-cols-2 items-center">
          <span className="pr-[7px] text-right">{label}</span>
          <input
            defaultValue={value}
            className={clsx(
              'h-[14px] text-center outline-none',
              i === 0 && 'rounded-t-[2px]',
              i === rows.length - 1 ? 'rounded-b-[2px]' : 'mb-px',
              value === '100%' ? 'bg-[#5680c2] text-white' : 'bg-[#595959]'
            )}
          />
        </label>
      ))}
    </div>
  )
}

function PanelHeader({ title, open, children, menu }) {
  return (
    <div className="flex h-[18px] items-center bg-[#404040] pr-[7px] pl-[6px] text-[9px] text-[#d0d0d0]">
      <button aria-label={title} className="flex items-center gap-[5px]" aria-expanded={!!open}>
        <Icon name={open ? 'tridown' : 'triright'} size={6} className="text-[#bbb]" />
        {!children && title}
      </button>
      {children}
      {menu && <button aria-label="Presets" className="mr-[11px] ml-auto"><Icon name="list" size={11} /></button>}
      <svg width="8" height="5" viewBox="0 0 8 5" className={clsx(!menu && 'ml-auto')} aria-hidden="true">
        <path d="M0 .5h8M0 2.500h8M0 4.500h8" stroke="#777" strokeDasharray="1 1" />
      </svg>
    </div>
  )
}

function Segmented({ items, active, label }) {
  return (
    <div role="group" aria-label={label} className="flex h-[13px] gap-px overflow-hidden rounded-[2px]">
      {items.map(v => (
        <button key={v} className={clsx('flex-1', v === active ? 'bg-[#5680c2] text-white' : 'bg-[#595959]')}>{v}</button>
      ))}
    </div>
  )
}

function Properties() {
  return (
    <section className="mt-[2px] flex min-h-0 flex-1 flex-col overflow-hidden rounded-[4px] bg-[#404040] text-[8px] text-[#dcdcdc]">
      <div className="flex h-[19px] shrink-0 items-center bg-[#383838] pr-[7px] pl-[6px]">
        <IconMenu icon="properties" label="Editor type" />
        <Icon name="scene" size={12} className="mr-[6px] ml-[8px]" />
        Scene
        <button aria-label="Pin" className="ml-auto"><Icon name="pin" size={11} /></button>
      </div>
      <div className="flex min-h-0 flex-1">
        <div className="flex w-[21px] shrink-0 flex-col gap-[2px] bg-[#232323] pt-[6px] pl-px">
          {TABS.map(([icon, color, label, gap]) => (
            <button key={label} aria-label={label} className={clsx('flex h-[19px] items-center justify-center rounded-l-[3px]', gap && 'mb-[6px]', label === 'Output' ? 'bg-[#404040]' : 'bg-[#2b2b2b]')}>
              <Icon name={icon} size={12} className={color} />
            </button>
          ))}
        </div>
        <div className="min-w-0 flex-1">
          <PanelHeader title="Dimensions" open menu />
          <div className="bg-[#383838] px-[7px] pt-[5px] pb-px">
            <Fields rows={[['Resolution X', '1920 px'], ['Y', '1080 px'], ['%', '100%']]} />
            <Fields rows={[['Aspect X', '1.000'], ['Y', '1.000']]} />
            <div className="mt-[5px] mb-[5px] flex flex-col items-end gap-[3px] pr-[2px]">
              <Check before checked label="Render Region" />
              <Check before label="Crop to Render Region" />
            </div>
            <Fields rows={[['Frame Start', '1'], ['End', '360'], ['Step', '1']]} />
            <Row label="Frame Rate"><Dropdown label="Frame rate" value="24 fps" className="ml-[3px] h-[14px]" /></Row>
            <button className="mt-[9px] ml-[9px] flex h-[14px] items-center gap-[5px]">
              <Icon name="triright" size={6} className="text-[#bbb]" />
              Time Remapping
            </button>
          </div>
          <PanelHeader title="Stereoscopy">
            <span className="ml-[6px]"><Check label="Stereoscopy" /></span>
          </PanelHeader>
          <PanelHeader title="Output" open />
          <div className="flex flex-col gap-[3px] bg-[#383838] px-[7px] pt-[7px] pb-[7px]">
            <div className="flex h-[14px]">
              <input aria-label="Output path" defaultValue="C:\Users\Louis Troullier\Desktop\Blender Training\Modeling\Rendu\Animations\Sci Loop\Eevee sequence\" className="min-w-0 flex-1 rounded-l-[2px] bg-[#1d1d1d] px-[5px] outline-none" />
              <button aria-label="Browse" className="ml-px flex w-[15px] items-center justify-center rounded-r-[2px] bg-[#545454]"><Icon name="folder" size={12} /></button>
            </div>
            <div className="my-px -ml-[7px] grid h-[14px] grid-cols-4 items-center justify-items-end pr-[2px]">
              <Check before checked label="Overwrite" />
              <Check before label="Placeholders" />
              <Check before checked label="File Extensions" />
              <Check before label="Cache Result" />
            </div>
            <Row label="File Format"><Dropdown label="File format" icon="image" value="PNG" className="h-[14px]" /></Row>
            <Row label="Color"><Segmented label="Color" items={['BW', 'RGB', 'RGBA']} active="RGBA" /></Row>
            <Row label="Color Depth"><Segmented label="Color depth" items={['8', '16']} active="16" /></Row>
            <label className="grid grid-cols-2 items-center">
              <span className="pr-[7px] text-right">Compression</span>
              <input defaultValue="15%" className="h-[13px] rounded-[2px] bg-[linear-gradient(90deg,#5680c2_14%,#595959_14%)] text-center outline-none" />
            </label>
          </div>
          <PanelHeader title="Metadata" />
          <PanelHeader title="Post Processing" />
        </div>
      </div>
    </section>
  )
}

/* ---------- status bar ---------- */

function Mouse({ button }) {
  return (
    <svg width="9" height="12" viewBox="0 0 9 12" aria-hidden="true">
      <rect x=".5" y=".5" width="8" height="11" rx="2.5" fill="none" stroke="#aaa" />
      {button === 0 && <path d="M1 1h3v5H1z" fill="#ddd" />}
      {button === 1 && <path d="M3.500 2h2v4h-2z" fill="#ddd" />}
      {button === 2 && <path d="M5 1h3v5H5z" fill="#ddd" />}
    </svg>
  )
}

function StatusBar() {
  return (
    <footer className="mt-px flex h-[14px] shrink-0 items-center bg-[#303030] pt-px pr-[22px] pl-[9px] text-[8px] text-[#a6a6a6]">
      <div className="flex gap-[168px]">
        {[0, 1, 2].map(b => <Mouse key={b} button={b} />)}
      </div>
      <span className="ml-auto">Scene Collection | Camera | Verts:542,295 | Faces:537,127 | Tris:1,080,200 | Objects:1/131 | Mem: 222.6 MB | v2.80.75</span>
    </footer>
  )
}

export default function App() {
  return (
    <div className="flex h-screen flex-col overflow-hidden bg-[#1b1b1b] font-['DejaVu_Sans_Condensed','Open_Sans',sans-serif] leading-[12px]">
      <TitleBar />
      <TopBar />
      <div className="flex min-h-0 flex-1 gap-[4px]">
        <div className="flex min-w-0 flex-1 flex-col">
          <NodeEditor />
          <Timeline />
        </div>
        <aside className="flex w-[487px] shrink-0 flex-col">
          <Outliner />
          <Properties />
        </aside>
      </div>
      <StatusBar />
    </div>
  )
}
